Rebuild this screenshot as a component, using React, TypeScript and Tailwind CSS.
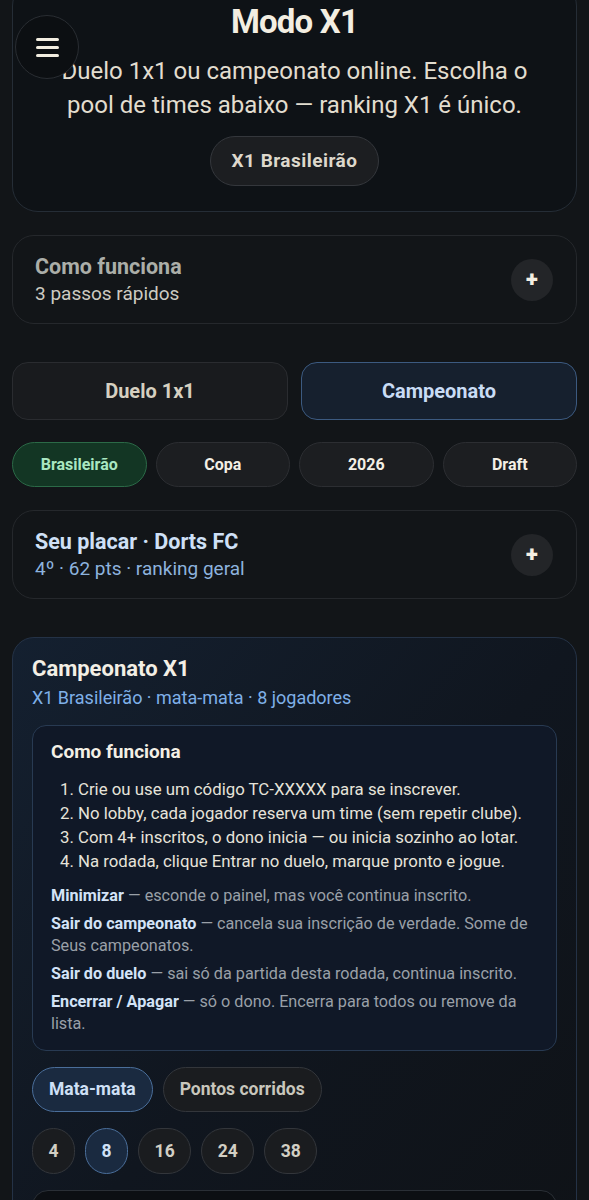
import { useState } from "react";

const steps = [
  "Crie ou use um código TC-XXXXX para se inscrever.",
  "No lobby, cada jogador reserva um time (sem repetir clube).",
  "Com 4+ inscritos, o dono inicia — ou inicia sozinho ao lotar.",
  "Na rodada, clique Entrar no duelo, marque pronto e jogue.",
];

const notes = [
  { label: "Minimizar", text: "esconde o painel, mas você continua inscrito." },
  { label: "Sair do campeonato", text: "cancela sua inscrição de verdade. Some de Seus campeonatos." },
  { label: "Sair do duelo", text: "sai só da partida desta rodada, continua inscrito." },
  { label: "Encerrar / Apagar", text: "só o dono. Encerra para todos ou remove da lista." },
];

const pools = ["Brasileirão", "Copa", "2026", "Draft"];
const sizes = [4, 8, 16, 24, 38];

function PlusButton() {
  return (
    <button
      type="button"
      className="flex h-[42px] w-[42px] shrink-0 items-center justify-center rounded-full bg-[#232528] text-[22px] font-black leading-none text-[#f4efe2]"
    >
      +
    </button>
  );
}

export default function App() {
  const [mode, setMode] = useState<"duelo" | "camp">("camp");
  const [pool, setPool] = useState("Brasileirão");
  const [format, setFormat] = useState<"mata" | "pontos">("mata");
  const [size, setSize] = useState(8);

  return (
    <div className="min-h-screen overflow-hidden bg-[#121518] px-3 pb-10 font-['Roboto',sans-serif]">
      <button
        type="button"
        className="fixed left-[15px] top-[15px] z-10 flex h-16 w-16 flex-col items-center justify-center gap-[5px] rounded-full border border-[#2a2e33] bg-[#0c0f12]"
      >
        <span className="h-[3px] w-[23px] rounded bg-[#f2ede0]" />
        <span className="h-[3px] w-[23px] rounded bg-[#f2ede0]" />
        <span className="h-[3px] w-[23px] rounded bg-[#f2ede0]" />
      </button>

      <section className="-mt-5 rounded-[26px] border border-[#252d36] bg-[#0e1216] px-4 pb-[25px] pt-[21px] text-center">
        <h1 className="text-[33px] font-bold leading-[40px] tracking-tight text-[#f3eee2]">Modo X1</h1>
        <p className="mx-auto mt-[12px] max-w-[500px] text-[24px] leading-[34px] text-[#e2ddcf]">
          Duelo 1x1 ou campeonato online. Escolha o pool de times abaixo — ranking X1 é único.
        </p>
        <button
          type="button"
          className="mt-[14px] h-[50px] rounded-full border border-[#34373c] bg-[#1c1e21] px-[21px] text-[19px] font-bold tracking-wide text-[#ddd8cc]"
        >
          X1 Brasileirão
        </button>
      </section>

      <section className="mt-[23px] flex h-[89px] items-center justify-between rounded-[22px] border border-[#25282c] bg-[#121518] pl-[22px] pr-[23px]">
        <div>
          <p className="text-[21.5px] font-bold leading-[27px] text-[#abaea8]">Como funciona</p>
          <p className="text-[19px] leading-[27px] text-[#cdcbc2]">3 passos rápidos</p>
        </div>
        <PlusButton />
      </section>

      <div className="mt-[38px] grid grid-cols-2 gap-[13px]">
        <button
          type="button"
          onClick={() => setMode("duelo")}
          className={
            mode === "duelo"
              ? "h-[58px] rounded-2xl border border-[#3c5a80] bg-[#16202e] text-[20px] font-bold text-[#c9dcf5]"
              : "h-[58px] rounded-2xl border border-[#2a2c30] bg-[#191b1e] text-[20px] font-bold text-[#d6d0c0]"
          }
        >
          Duelo 1x1
        </button>
        <button
          type="button"
          onClick={() => setMode("camp")}
          className={
            mode === "camp"
              ? "h-[58px] rounded-2xl border border-[#3c5a80] bg-[#16202e] text-[20px] font-bold text-[#c9dcf5]"
              : "h-[58px] rounded-2xl border border-[#2a2c30] bg-[#191b1e] text-[20px] font-bold text-[#d6d0c0]"
          }
        >
          Campeonato
        </button>
      </div>

      <div className="mt-[22px] grid grid-cols-4 gap-[9px]">
        {pools.map((p) => (
          <button
            key={p}
            type="button"
            onClick={() => setPool(p)}
            className={
              pool === p
                ? "h-[45px] rounded-full border border-[#2b6a47] bg-[#133624] text-[16px] font-bold text-[#a9e7c1]"
                : "h-[45px] rounded-full border border-[#2c2e32] bg-[#1c1e21] text-[16px] font-bold text-[#f3efe5]"
            }
          >
            {p}
          </button>
        ))}
      </div>

      <section className="mt-[23px] flex h-[89px] items-center justify-between rounded-[22px] border border-[#25282c] bg-[#121518] pl-[22px] pr-[23px]">
        <div>
          <p className="text-[21.5px] font-bold leading-[27px] text-[#cfe0f6]">Seu placar · Dorts FC</p>
          <p className="text-[19px] leading-[27px] text-[#8db3de]">4º · 62 pts · ranking geral</p>
        </div>
        <PlusButton />
      </section>

      <section className="mt-[38px] rounded-[22px] border border-[#243246] bg-gradient-to-br from-[#142030] via-[#10161f] to-[#0f1216] px-[19px] pt-[17px]">
        <h2 className="text-[22px] font-bold leading-[28px] text-[#f3efe5]">Campeonato X1</h2>
        <p className="mt-[2px] text-[18px] leading-[26px] text-[#7fb0e8]">X1 Brasileirão · mata-mata · 8 jogadores</p>

        <div className="mt-[14px] rounded-[14px] border border-[#283a52] bg-[#101827] pb-[15px] pl-[18px] pr-[16px] pt-[13px]">
          <h3 className="text-[19px] font-bold leading-[26px] text-[#f3efe5]">Como funciona</h3>
          <ol className="mt-[12px] list-decimal pl-[27px] text-[16.8px] leading-[24px] text-[#e6e3da]">
            {steps.map((s) => (
              <li key={s}>{s}</li>
            ))}
          </ol>
          <div className="mt-[12px] space-y-[6px] text-[16.2px] leading-[22px] text-[#9aa0a8]">
            {notes.map((n) => (
              <p key={n.label}>
                <span className="font-bold text-[#d3e3f7]">{n.label}</span> — {n.text}
              </p>
            ))}
          </div>
        </div>

        <div className="mt-[16px] flex gap-[10px]">
          <button
            type="button"
            onClick={() => setFormat("mata")}
            className={
              format === "mata"
                ? "h-[45px] rounded-full border border-[#4a6e9a] bg-[#1a2a40] px-4 text-[17.5px] font-bold text-[#cfe0f6]"
                : "h-[45px] rounded-full border border-[#33363b] bg-[#1a1c1f] px-4 text-[17.5px] font-bold text-[#c8c6bc]"
            }
          >
            Mata-mata
          </button>
          <button
            type="button"
            onClick={() => setFormat("pontos")}
            className={
              format === "pontos"
                ? "h-[45px] rounded-full border border-[#4a6e9a] bg-[#1a2a40] px-4 text-[17.5px] font-bold text-[#cfe0f6]"
                : "h-[45px] rounded-full border border-[#33363b] bg-[#1a1c1f] px-4 text-[17.5px] font-bold text-[#c8c6bc]"
            }
          >
            Pontos corridos
          </button>
        </div>

        <div className="mt-[16px] flex gap-[10px]">
          {sizes.map((n) => (
            <button
              key={n}
              type="button"
              onClick={() => setSize(n)}
              className={
                size === n
                  ? "h-[46px] min-w-[43px] rounded-full border border-[#4a6e9a] bg-[#1a2a40] px-[15.5px] text-[17.5px] font-bold text-[#cfe0f6]"
                  : "h-[46px] min-w-[43px] rounded-full border border-[#33363b] bg-[#1a1c1f] px-[15.5px] text-[17.5px] font-bold text-[#d2cfc4]"
              }
            >
              {n}
            </button>
          ))}
        </div>

        <div className="mt-[16px] h-[120px] rounded-[16px] border border-[#2a2f36] bg-[#0c0f13]" />
      </section>
    </div>
  );
}
